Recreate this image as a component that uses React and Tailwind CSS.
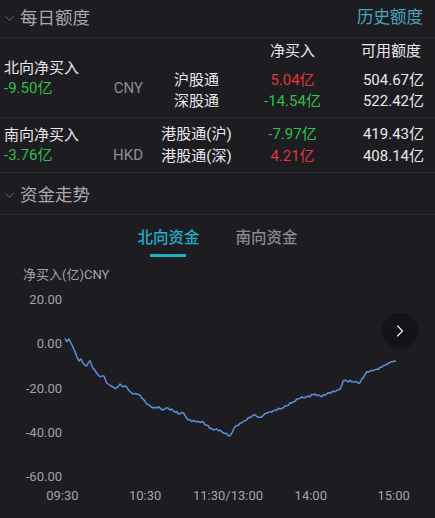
import { ChevronDown, ChevronRight } from "lucide-react";

const font = "font-['Roboto','Noto_Sans_CJK_SC',sans-serif]";

const north = [
  { name: "沪股通", net: "5.04亿", up: true, avail: "504.67亿" },
  { name: "深股通", net: "-14.54亿", up: false, avail: "522.42亿" },
];
const south = [
  { name: "港股通(沪)", net: "-7.97亿", up: false, avail: "419.43亿" },
  { name: "港股通(深)", net: "4.21亿", up: true, avail: "408.14亿" },
];

// rough trace of the north-bound flow line, in svg coords
const trace = [
  [1, 48.3], [2.7, 51.7], [5, 49], [7, 53], [11, 62], [15, 71], [17, 69], [19, 73],
  [22.7, 76], [26, 70.7], [28.7, 78], [32, 82], [36, 86.7], [40, 86], [42.7, 93],
  [47, 96], [51.3, 98.7], [56, 94], [58.7, 96.7], [61, 96], [67.7, 103], [72.7, 104],
  [76, 105], [82.7, 114], [89, 118], [95, 116.7], [98.7, 120], [102.7, 117.7],
  [109.3, 120.7], [116, 124], [119.3, 122.7], [124.3, 130], [132.7, 131.7],
  [137.7, 131.7], [149.3, 140], [152.7, 139], [157.7, 141.7], [166, 145.7],
  [171, 136.7], [179.3, 131.7], [189.3, 125], [196, 127.3], [202.7, 123.3],
  [209.3, 120.7], [219.3, 117.7], [229.3, 111.7], [237.7, 106.7], [241, 107.7],
  [251, 104], [257.7, 106.7], [264.3, 102.7], [271, 101.7], [276, 99.3],
  [279.3, 90.7], [291, 91.7], [296, 92.7], [302.7, 81.7], [309.3, 80.7],
  [317.7, 77.3], [322.7, 74], [328.7, 71.7], [332, 71.7],
];

function linePoints() {
  const pts = [];
  trace.forEach(([x, y], i) => {
    pts.push([x, y]);
    const next = trace[i + 1];
    if (!next) return;
    const steps = Math.floor((next[0] - x) / 1.6);
    for (let s = 1; s < steps; s++) {
      const t = s / steps;
      const jitter = Math.sin((x + s) * 2.3) * 0.9;
      pts.push([x + (next[0] - x) * t, y + (next[1] - y) * t + jitter]);
    }
  });
  return pts.map(([x, y]) => `${x.toFixed(1)},${y.toFixed(1)}`).join(" ");
}

function Group({ title, total, currency, rows, header }) {
  return (
    <div className="flex border-b border-[#2a292f]">
      <div className="w-[148px] flex items-center pl-1">
        <div className="flex-1">
          <div className="text-[15px] leading-[20px] text-[#e8e8ea]">{title}</div>
          <div className="flex items-center justify-between pr-[5px]">
            <span className="text-[15px] leading-[20px] text-[#2fbf4b]">{total}</span>
            <span className="text-[15px] leading-[20px] text-[#8d8d92]">{currency}</span>
          </div>
        </div>
      </div>
      <div className="flex-1 flex flex-col">
        {header && (
          <div className="flex h-[26px] items-center text-[15px] text-[#e8e8ea]">
            <div className="w-[97px]" />
            <div className="w-[95px] text-center">净买入</div>
            <div className="flex-1 text-right pr-[14px]">可用额度</div>
          </div>
        )}
        <div className={`flex flex-col justify-center ${header ? "h-[53px]" : "h-[54px]"}`}>
          {rows.map((r) => (
            <div key={r.name} className="flex h-[21.5px] items-center text-[15px] text-[#e8e8ea]">
              <div className="w-[97px] text-center">{r.name}</div>
              <div className={`w-[95px] text-center ${r.up ? "text-[#e2353c]" : "text-[#2fbf4b]"}`}>
                {r.net}
              </div>
              <div className="flex-1 text-right pr-[11px]">{r.avail}</div>
            </div>
          ))}
        </div>
      </div>
    </div>
  );
}

function SectionHead({ title, right }) {
  return (
    <div className="flex items-center justify-between h-[38px] pl-[2px] pr-3 border-b border-[#2a292f]">
      <div className="flex items-center gap-[3px]">
        <ChevronDown size={15} strokeWidth={1.2} className="text-[#8e8e93]" />
        <span className="text-[17.5px] text-[#a9a9ad]">{title}</span>
      </div>
      {right && <span className="text-[16.5px] text-[#4aa5bf]">{right}</span>}
    </div>
  );
}

export default function App() {
  const yLabels = ["20.00", "0.00", "-20.00", "-40.00", "-60.00"];
  const xLabels = ["09:30", "10:30", "11:30/13:00", "14:00", "15:00"];
  return (
    <div className={`${font} w-[435px] h-[518px] bg-[#1d1c21] overflow-hidden`}>
      <SectionHead title="每日额度" right="历史额度" />
      <Group title="北向净买入" total="-9.50亿" currency="CNY" rows={north} header />
      <Group title="南向净买入" total="-3.76亿" currency="HKD" rows={south} />

      <div className="mt-[4px]">
        <SectionHead title="资金走势" />
      </div>

      <div className="flex justify-center gap-[36px] pt-[12px]">
        <div className="flex flex-col items-center">
          <span className="text-[15.5px] font-medium leading-[22px] text-[#1eb0c9]">北向资金</span>
          <span className="mt-[5px] h-[3px] w-[36px] bg-[#1eb0c9]" />
        </div>
        <span className="text-[15.5px] font-medium leading-[22px] text-[#8a8a8f]">南向资金</span>
      </div>

      <div className="pl-[23px] mt-[9px] text-[13px] leading-[18px] text-[#a3a3a8]">净买入(亿)CNY</div>

      <div className="relative mt-[6px] flex h-[197px]">
        <div className="w-[62px] flex flex-col justify-between text-right text-[13px] leading-[20px] text-[#a3a3a8]">
          {yLabels.map((l) => (
            <span key={l}>{l}</span>
          ))}
        </div>
        <svg className="ml-[2px] flex-1 overflow-visible" viewBox="0 0 371 198" width="371" height="198">
          <polyline
            points={linePoints()}
            fill="none"
            stroke="#5b90d2"
            strokeWidth="1.5"
            strokeLinejoin="round"
          />
        </svg>
        <button className="absolute left-[382px] top-[23px] w-[36px] h-[36px] rounded-full bg-[#141317] flex items-center justify-center">
          <ChevronRight size={20} strokeWidth={1.4} className="text-[#f0f0f0]" />
        </button>
      </div>

      <div className="ml-[21px] w-[414px] grid grid-cols-5 text-center text-[13px] leading-[18px] text-[#a3a3a8]">
        {xLabels.map((l) => (
          <span key={l} className="whitespace-nowrap">{l}</span>
        ))}
      </div>
    </div>
  );
}
